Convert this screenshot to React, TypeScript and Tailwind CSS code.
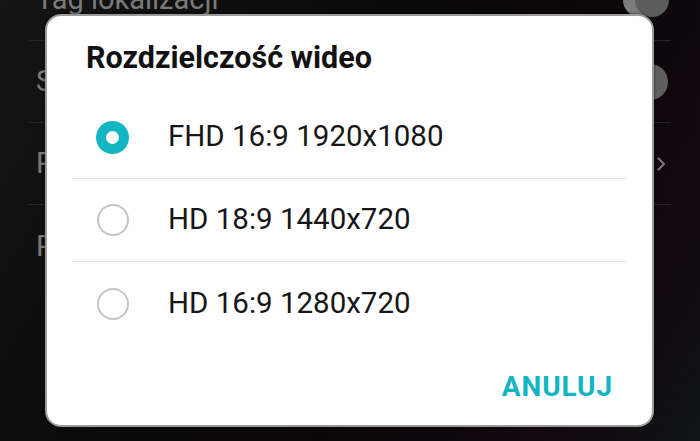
import React from "react";

const font = { fontFamily: "Roboto, 'Noto Sans', 'Liberation Sans', sans-serif" };

function BgRow({ label, right, last }: { label: string; right?: React.ReactNode; last?: boolean }) {
  return (
    <div
      className={
        "h-[82px] flex items-center justify-between mx-[29px] shrink-0 " +
        (last ? "" : "border-b border-[#262626]")
      }
    >
      <span className="text-[29px] text-[#7a7a7a] ml-[7px] leading-none">{label}</span>
      {right}
    </div>
  );
}

function Radio({ checked }: { checked: boolean }) {
  return checked ? (
    <div className="w-[33px] h-[33px] rounded-full bg-[#12b5c2] flex items-center justify-center shrink-0">
      <div className="w-[13px] h-[13px] rounded-full bg-white" />
    </div>
  ) : (
    <div className="w-[32px] h-[32px] rounded-full border-[2px] border-[#c4c4c4] shrink-0" />
  );
}

function Option({ label, checked, last }: { label: string; checked: boolean; last?: boolean }) {
  return (
    <div className={"h-[83px] flex items-center " + (last ? "" : "border-b border-[#e4e4e4]")}>
      <div className="w-[33px] ml-[24px] flex justify-center">
        <Radio checked={checked} />
      </div>
      <span className="ml-[39px] text-[29.5px] leading-none text-[#161616]">{label}</span>
    </div>
  );
}

export default function App() {
  return (
    <div
      className="relative w-[700px] h-[441px] overflow-hidden bg-[linear-gradient(120deg,#151515_0%,#0b0b0b_35%,#0a0608_60%,#140810_85%,#0e1414_100%)]"
      style={font}
    >
      <div className="flex flex-col mt-[-41px]">
        <BgRow
          label="Tag lokalizacji"
          right={
            <div className="flex items-center mr-[2px]">
              <div className="w-[34px] h-[34px] rounded-full bg-[#7c7c7c]" />
              <div className="w-[34px] h-[34px] rounded-full bg-[#5c5c5c] -ml-[22px]" />
            </div>
          }
        />
        <BgRow label="Samowyzwalacz" right={<div className="w-[36px] h-[36px] rounded-full bg-[#5e5e5e] mr-[3px]" />} />
        <BgRow
          label="Pamięć"
          right={
            <svg width="10" height="16" viewBox="0 0 10 16" className="mr-[5px]">
              <path d="M2 2 L8 8 L2 14" fill="none" stroke="#7a7a7a" strokeWidth="2" />
            </svg>
          }
        />
        <BgRow label="Pomoc" last />
      </div>

      <div className="absolute left-[45px] top-[14px] w-[609px] h-[413px] bg-white rounded-[16px] border-[2px] border-[#9a9a9a] shadow-[0_0_3px_rgba(0,0,0,0.6)] flex flex-col">
        <div className="pl-[39px] pt-[27px] text-[30.5px] leading-[30px] font-bold text-[#121212]">
          Rozdzielczość wideo
        </div>
        <div className="mx-[25px] mt-[23px] flex flex-col">
          <Option label="FHD 16:9 1920x1080" checked />
          <Option label="HD 18:9 1440x720" checked={false} />
          <Option label="HD 16:9 1280x720" checked={false} last />
        </div>
        <div className="flex justify-end pr-[39px] mt-[28px]">
          <span className="text-[28px] leading-[28px] font-bold tracking-[0.9px] text-[#12b5c2]">ANULUJ</span>
        </div>
      </div>
    </div>
  );
}
